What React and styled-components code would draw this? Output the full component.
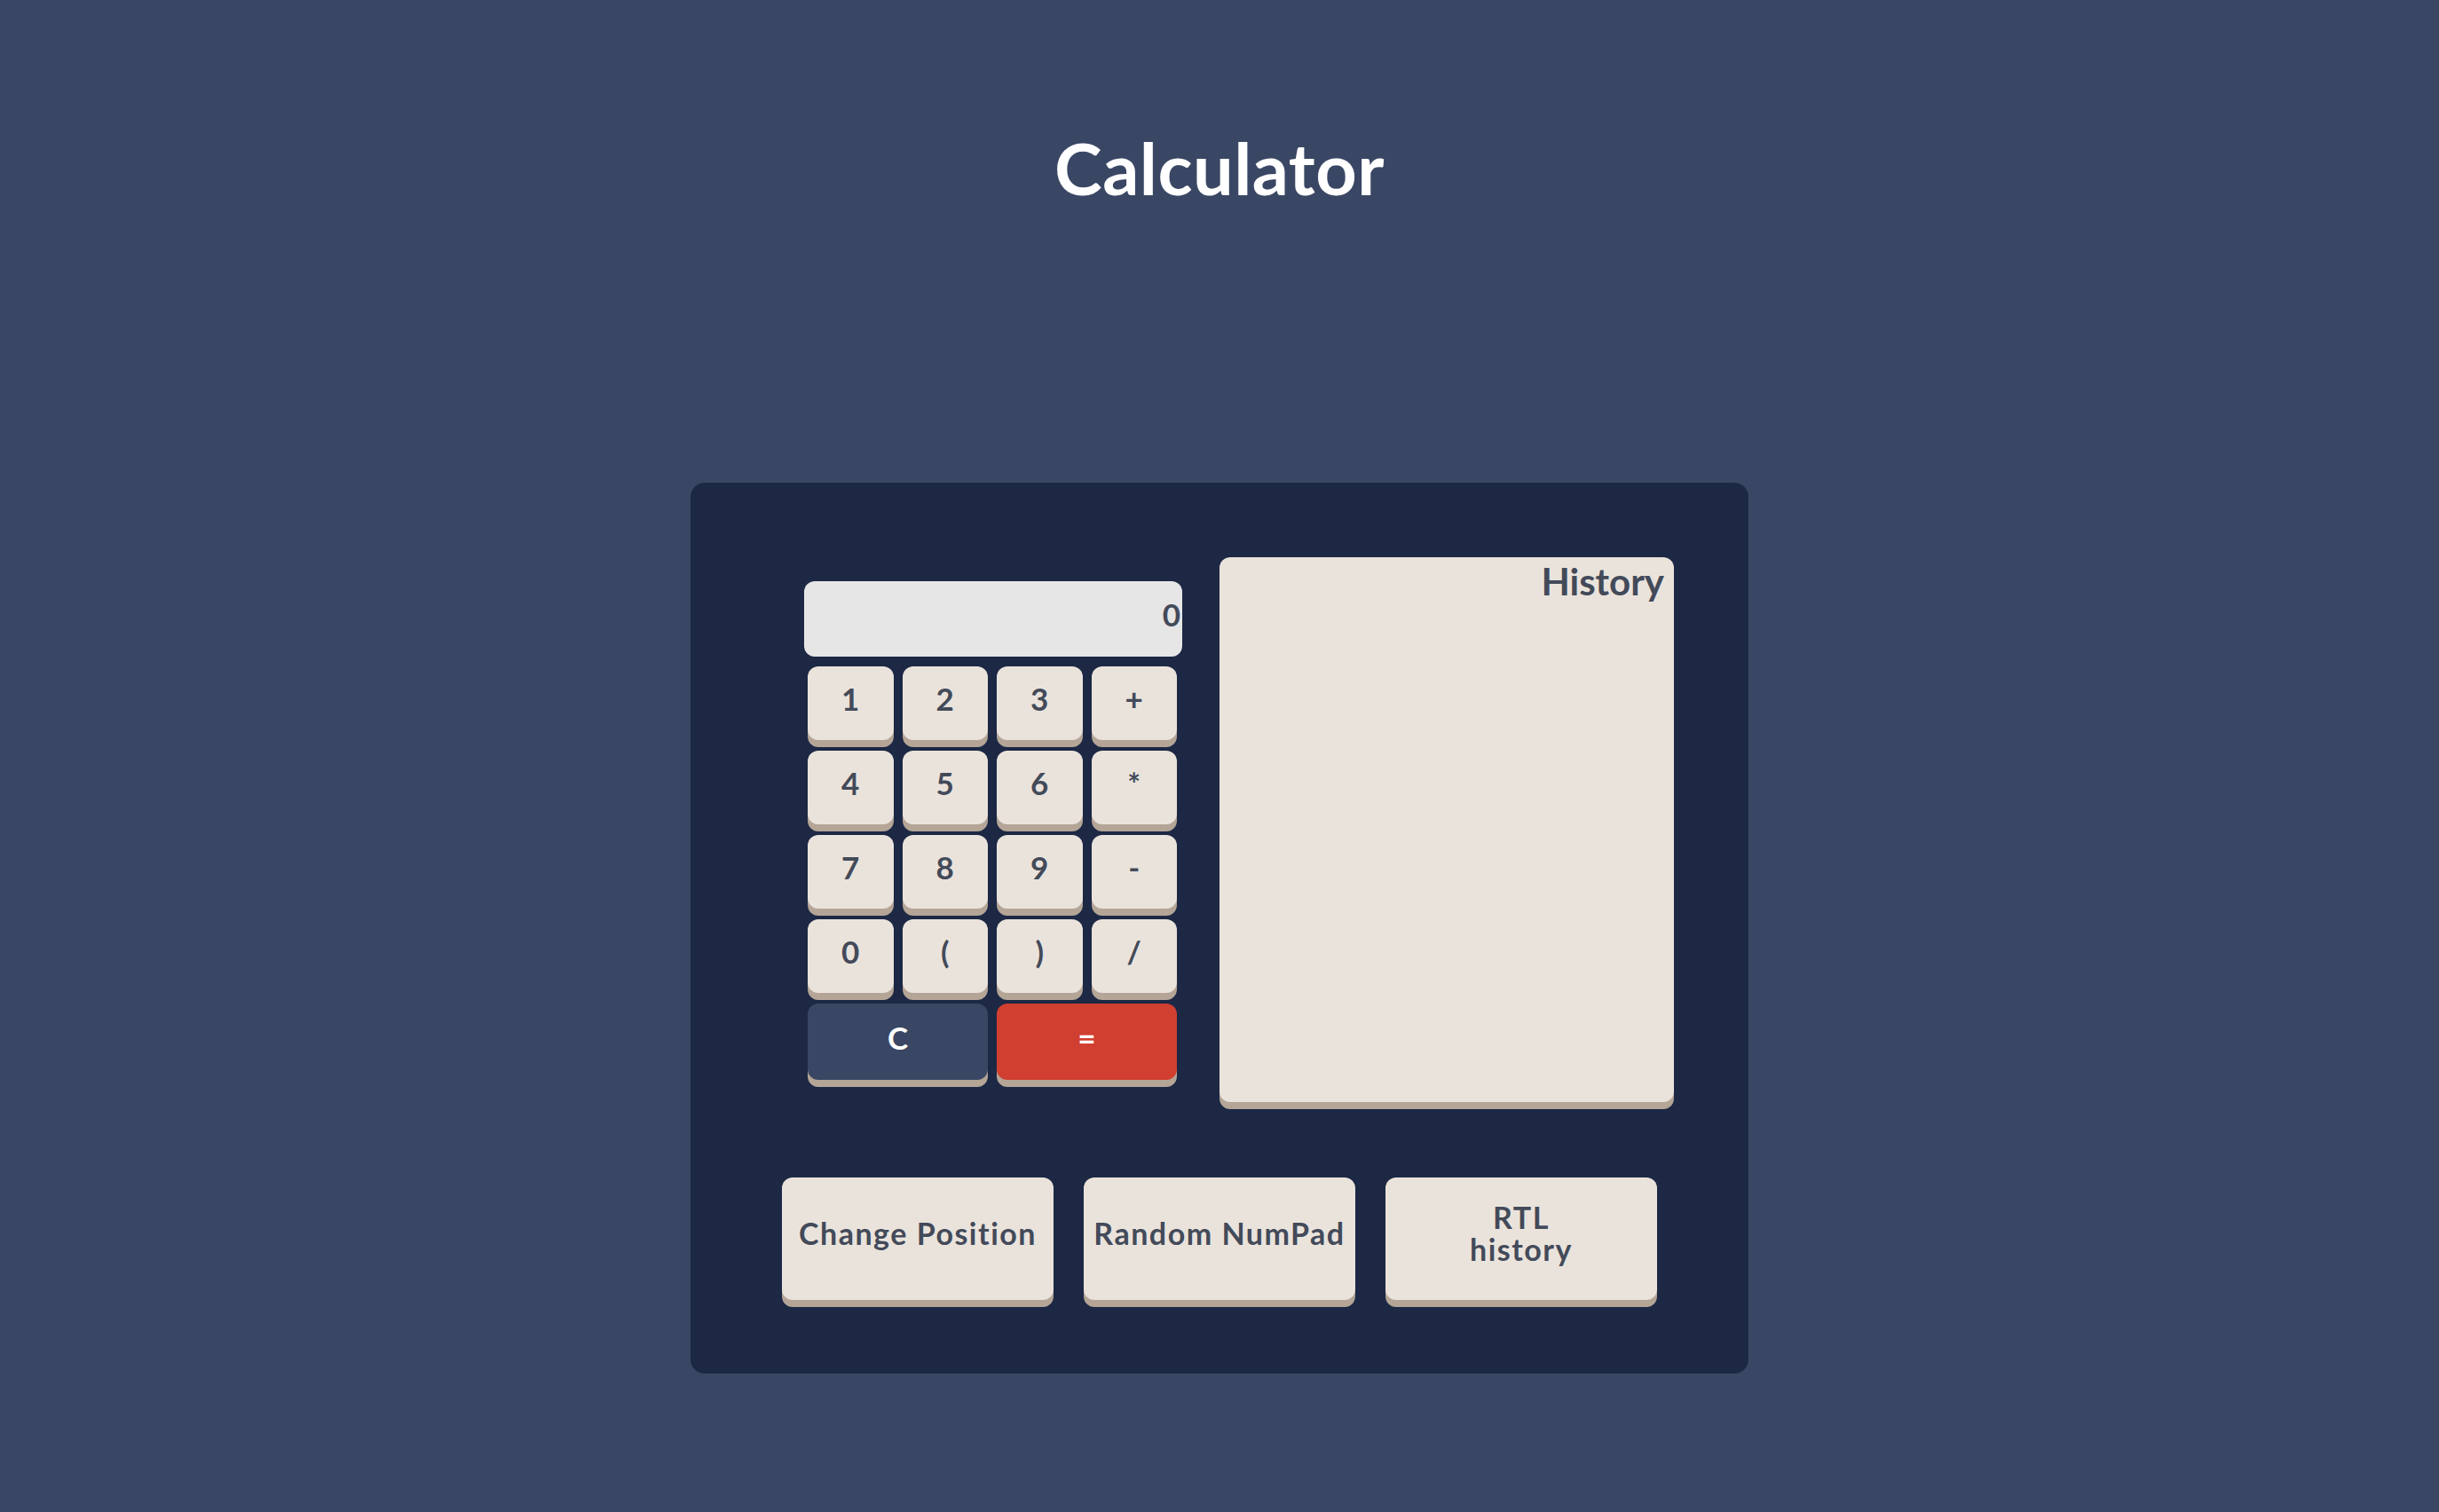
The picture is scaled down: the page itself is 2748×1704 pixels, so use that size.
import React, { useState } from 'react'
import styled, { createGlobalStyle } from 'styled-components'

const GlobalStyle = createGlobalStyle`
  html, body {
    margin: 0;
    padding: 0;
    background: #3a4764;
  }
  body {
    font-family: 'Lato', 'Noto Sans', sans-serif;
  }
`

const keys = ['1', '2', '3', '+', '4', '5', '6', '*', '7', '8', '9', '-', '0', '(', ')', '/']

const App = () => {
  const [value] = useState('0')
  return (
    <Page>
      <GlobalStyle />
      <Title>Calculator</Title>
      <Panel>
        <TopRow>
          <Calc>
            <Display>{value}</Display>
            <Keypad>
              {keys.map((k) => (
                <Key key={k}>{k}</Key>
              ))}
              <Key wide variant="clear">C</Key>
              <Key wide variant="equal">=</Key>
            </Keypad>
          </Calc>
          <History>
            <HistoryTitle>History</HistoryTitle>
          </History>
        </TopRow>
        <Actions>
          <ActionButton>Change Position</ActionButton>
          <ActionButton>Random NumPad</ActionButton>
          <ActionButton>
            RTL
            <br />
            history
          </ActionButton>
        </Actions>
      </Panel>
    </Page>
  )
}

export default App

const Page = styled.div`
  min-height: 1704px;
  display: flex;
  flex-direction: column;
  align-items: center;
`

const Title = styled.h1`
  margin: 148px 0 0;
  height: 396px;
  color: #ffffff;
  font-size: 81px;
  font-weight: 700;
  letter-spacing: 0.5px;
  line-height: 1;
`

const Panel = styled.div`
  width: 1192px;
  box-sizing: border-box;
  background: #1c2844;
  border-radius: 16px;
  padding: 84px 0 75px;
`

const TopRow = styled.div`
  display: flex;
  align-items: center;
  gap: 42px;
  padding: 0 84px 0 128px;
`

const Calc = styled.div`
  width: 426px;
  display: flex;
  flex-direction: column;
`

const Display = styled.div`
  height: 85px;
  background: #e6e6e6;
  border-radius: 12px;
  color: #434a59;
  font-size: 35px;
  font-weight: 700;
  text-align: right;
  line-height: 74px;
  padding-right: 2px;
`

const Keypad = styled.div`
  display: grid;
  grid-template-columns: repeat(4, 1fr);
  column-gap: 10px;
  row-gap: 12px;
  margin: 11px 6px 7px 4px;
`

const keyColors = {
  clear: { bg: '#3a4764', fg: '#ffffff' },
  equal: { bg: '#d13f30', fg: '#ffffff' },
}

const Key = styled.div`
  grid-column: ${(p) => (p.wide ? 'span 2' : 'auto')};
  height: ${(p) => (p.wide ? '86px' : '83px')};
  background: ${(p) => (keyColors[p.variant] ? keyColors[p.variant].bg : '#eae3dc')};
  color: ${(p) => (keyColors[p.variant] ? keyColors[p.variant].fg : '#434a59')};
  border-radius: 12px;
  box-shadow: 0 8px 0 #b4a597;
  display: flex;
  align-items: center;
  justify-content: center;
  font-size: 35px;
  font-weight: 700;
  padding-bottom: 10px;
  box-sizing: border-box;
`

const History = styled.div`
  width: 512px;
  height: 614px;
  background: #eae3dc;
  border-radius: 12px;
  box-shadow: 0 8px 0 #b4a597;
  margin-bottom: 8px;
`

const HistoryTitle = styled.div`
  text-align: right;
  padding: 2px 11px 0 0;
  color: #434a59;
  font-size: 42px;
  font-weight: 700;
`

const Actions = styled.div`
  display: flex;
  justify-content: center;
  gap: 34px;
  margin-top: 77px;
`

const ActionButton = styled.div`
  width: 306px;
  height: 138px;
  margin-bottom: 8px;
  background: #eae3dc;
  border-radius: 12px;
  box-shadow: 0 8px 0 #b4a597;
  color: #434a59;
  font-size: 34px;
  font-weight: 700;
  letter-spacing: 1.5px;
  line-height: 36px;
  display: flex;
  align-items: center;
  justify-content: center;
  text-align: center;
  padding-bottom: 12px;
  box-sizing: border-box;
`
